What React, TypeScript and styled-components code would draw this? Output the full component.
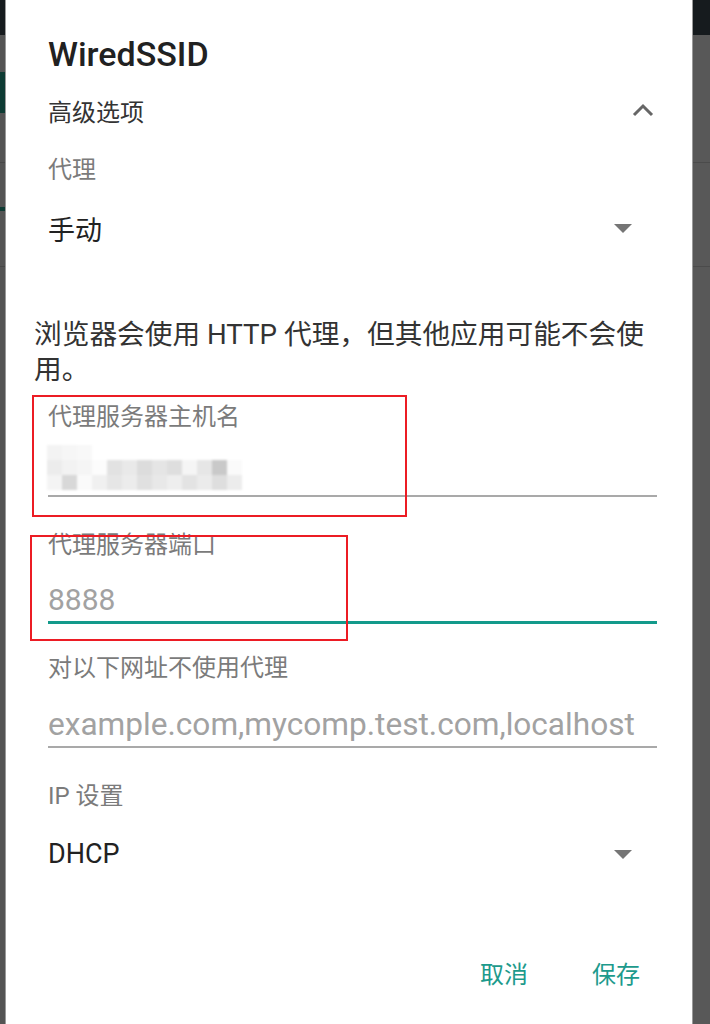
import React from 'react';
import styled, { createGlobalStyle } from 'styled-components';

const GlobalStyle = createGlobalStyle`
  html, body {
    margin: 0;
    padding: 0;
    background: #555555;
  }
  body {
    font-family: Roboto, "Noto Sans CJK SC", sans-serif;
  }
  * {
    box-sizing: border-box;
  }
`;

const Screen = styled.div`
  display: flex;
  width: 710px;
  height: 1024px;
  overflow: hidden;
`;

// dimmed app that peeks out on both sides of the dialog
const Strip = styled.div<{ $side: 'left' | 'right' }>`
  display: flex;
  flex-direction: column;
  flex-shrink: 0;
  width: ${(p) => (p.$side === 'left' ? '6px' : '18px')};
  ${(p) => (p.$side === 'left' ? 'border-right' : 'border-left')}: 1px solid #9a9a9a;
`;

const Band = styled.div<{ $h?: number; $bg: string }>`
  height: ${(p) => (p.$h ? `${p.$h}px` : 'auto')};
  flex: ${(p) => (p.$h ? 'none' : 1)};
  background: ${(p) => p.$bg};
`;

const Dialog = styled.div`
  flex: 1;
  display: flex;
  flex-direction: column;
  background: #ffffff;
  padding: 0 35px 0 42px;
`;

const Title = styled.h1`
  margin: 29px 0 0;
  height: 50px;
  line-height: 50px;
  font-size: 34px;
  font-weight: 500;
  color: #212121;
`;

const SectionHeader = styled.div`
  display: flex;
  align-items: center;
  justify-content: space-between;
  height: 62px;
  font-size: 24px;
  color: #333333;

  svg {
    margin-right: 3px;
  }
`;

const FieldLabel = styled.div<{ $mt: number }>`
  margin-top: ${(p) => p.$mt}px;
  line-height: 30px;
  font-size: 24px;
  color: #7b7b7b;
`;

const SelectRow = styled.div`
  display: flex;
  align-items: center;
  justify-content: space-between;
  margin-top: 14px;
  height: 58px;
  font-size: 27px;
  color: #222222;

  svg {
    margin-right: 25px;
  }
`;

const Note = styled.p`
  margin: 60px 0 0 -14px;
  font-size: 27.7px;
  line-height: 35px;
  color: #333333;
`;

const Field = styled.div`
  position: relative;
`;

const TextInput = styled.div<{ $h: number; $line: number; $color: string; $size?: number }>`
  display: flex;
  align-items: flex-end;
  height: ${(p) => p.$h}px;
  padding-bottom: 1px;
  border-bottom: ${(p) => p.$line}px solid ${(p) => p.$color};
  font-size: ${(p) => p.$size ?? 30}px;
  line-height: 40px;
  color: #a2a2a2;
  white-space: nowrap;
`;

// red annotation rectangles drawn over the screenshot
const Annotation = styled.div<{ $top: number; $left: number; $w: number; $h: number }>`
  position: absolute;
  top: ${(p) => p.$top}px;
  left: ${(p) => p.$left}px;
  width: ${(p) => p.$w}px;
  height: ${(p) => p.$h}px;
  border: 2px solid #ec1c24;
  pointer-events: none;
`;

const Mosaic = styled.div`
  display: grid;
  grid-template-columns: repeat(14, 15px);
  grid-auto-rows: 15px;
  margin: 0 0 4px -1px;
  filter: blur(1px);
`;

const Tile = styled.div<{ $shade: string }>`
  background: ${(p) => p.$shade};
`;

const Actions = styled.div`
  display: flex;
  justify-content: flex-end;
  align-items: center;
  gap: 36px;
  height: 60px;
  margin: 62px 3px 0 0;
`;

const ActionButton = styled.button`
  background: none;
  border: none;
  padding: 0 14px;
  font-family: inherit;
  font-size: 24px;
  line-height: 60px;
  color: #1d9a8c;
  cursor: pointer;
`;

const ChevronUp = () => (
  <svg width="22" height="14" viewBox="0 0 22 14">
    <polyline points="2,12 11,3 20,12" fill="none" stroke="#666666" strokeWidth="3" />
  </svg>
);

const DropArrow = () => (
  <svg width="18" height="9" viewBox="0 0 18 9">
    <polygon points="0,0 18,0 9,9" fill="#757575" />
  </svg>
);

const mosaicRows = [
  ['#f3f3f3', '#f6f6f6', '#f8f8f8', '#fff', '#fff', '#fff', '#fff', '#fff', '#fff', '#fff', '#fff', '#fff', '#fff', '#fff'],
  ['#ececec', '#f2f2f2', '#f5f5f5', '#fcfcfc', '#e2e2e2', '#e9e9e9', '#dcdcdc', '#e5e5e5', '#dedede', '#f5f5f5', '#e6e6e6', '#c9c9c9', '#fafafa', '#fff'],
  ['#f4f4f4', '#d8d8d8', '#fafafa', '#f0f0f0', '#e6e6e6', '#ececec', '#e0e0e0', '#e8e8e8', '#eeeeee', '#e3e3e3', '#ebebeb', '#dedede', '#ececec', '#fff'],
];

const App: React.FC = () => {
  return (
    <>
      <GlobalStyle />
      <Screen>
        <Strip $side="left">
          <Band $h={35} $bg="#161b1e" />
          <Band $h={37} $bg="#545454" />
          <Band $h={41} $bg="#0d3b33" />
          <Band $h={49} $bg="#545454" />
          <Band $h={1} $bg="#474747" />
          <Band $h={44} $bg="#545454" />
          <Band $h={4} $bg="#0e3b33" />
          <Band $h={55} $bg="#545454" />
          <Band $h={1} $bg="#474747" />
          <Band $bg="#545454" />
        </Strip>

        <Dialog>
          <Title>WiredSSID</Title>
          <SectionHeader>
            <span>高级选项</span>
            <ChevronUp />
          </SectionHeader>

          <FieldLabel $mt={14}>代理</FieldLabel>
          <SelectRow>
            <span>手动</span>
            <DropArrow />
          </SelectRow>

          <Note>浏览器会使用 HTTP 代理，但其他应用可能不会使用。</Note>

          <Field>
            <FieldLabel $mt={15}>代理服务器主机名</FieldLabel>
            <TextInput $h={65} $line={2} $color="#a9a9a9">
              <Mosaic>
                {mosaicRows.map((row, r) =>
                  row.map((shade, c) => <Tile key={`${r}-${c}`} $shade={shade} />)
                )}
              </Mosaic>
            </TextInput>
            <Annotation $top={8} $left={-16} $w={375} $h={122} />
          </Field>

          <Field>
            <FieldLabel $mt={33}>代理服务器端口</FieldLabel>
            <TextInput $h={64} $line={3} $color="#139a8b">8888</TextInput>
            <Annotation $top={38} $left={-18} $w={318} $h={106} />
          </Field>

          <Field>
            <FieldLabel $mt={29}>对以下网址不使用代理</FieldLabel>
            <TextInput $h={65} $line={2} $color="#a9a9a9" $size={31.6}>
              example.com,mycomp.test.com,localhost
            </TextInput>
          </Field>

          <FieldLabel $mt={33}>IP 设置</FieldLabel>
          <SelectRow>
            <span>DHCP</span>
            <DropArrow />
          </SelectRow>

          <Actions>
            <ActionButton>取消</ActionButton>
            <ActionButton>保存</ActionButton>
          </Actions>
        </Dialog>

        <Strip $side="right">
          <Band $h={35} $bg="#161b1e" />
          <Band $h={127} $bg="#585858" />
          <Band $h={1} $bg="#4b4b4b" />
          <Band $h={103} $bg="#585858" />
          <Band $h={1} $bg="#4b4b4b" />
          <Band $bg="#585858" />
        </Strip>
      </Screen>
    </>
  );
};

export default App;
